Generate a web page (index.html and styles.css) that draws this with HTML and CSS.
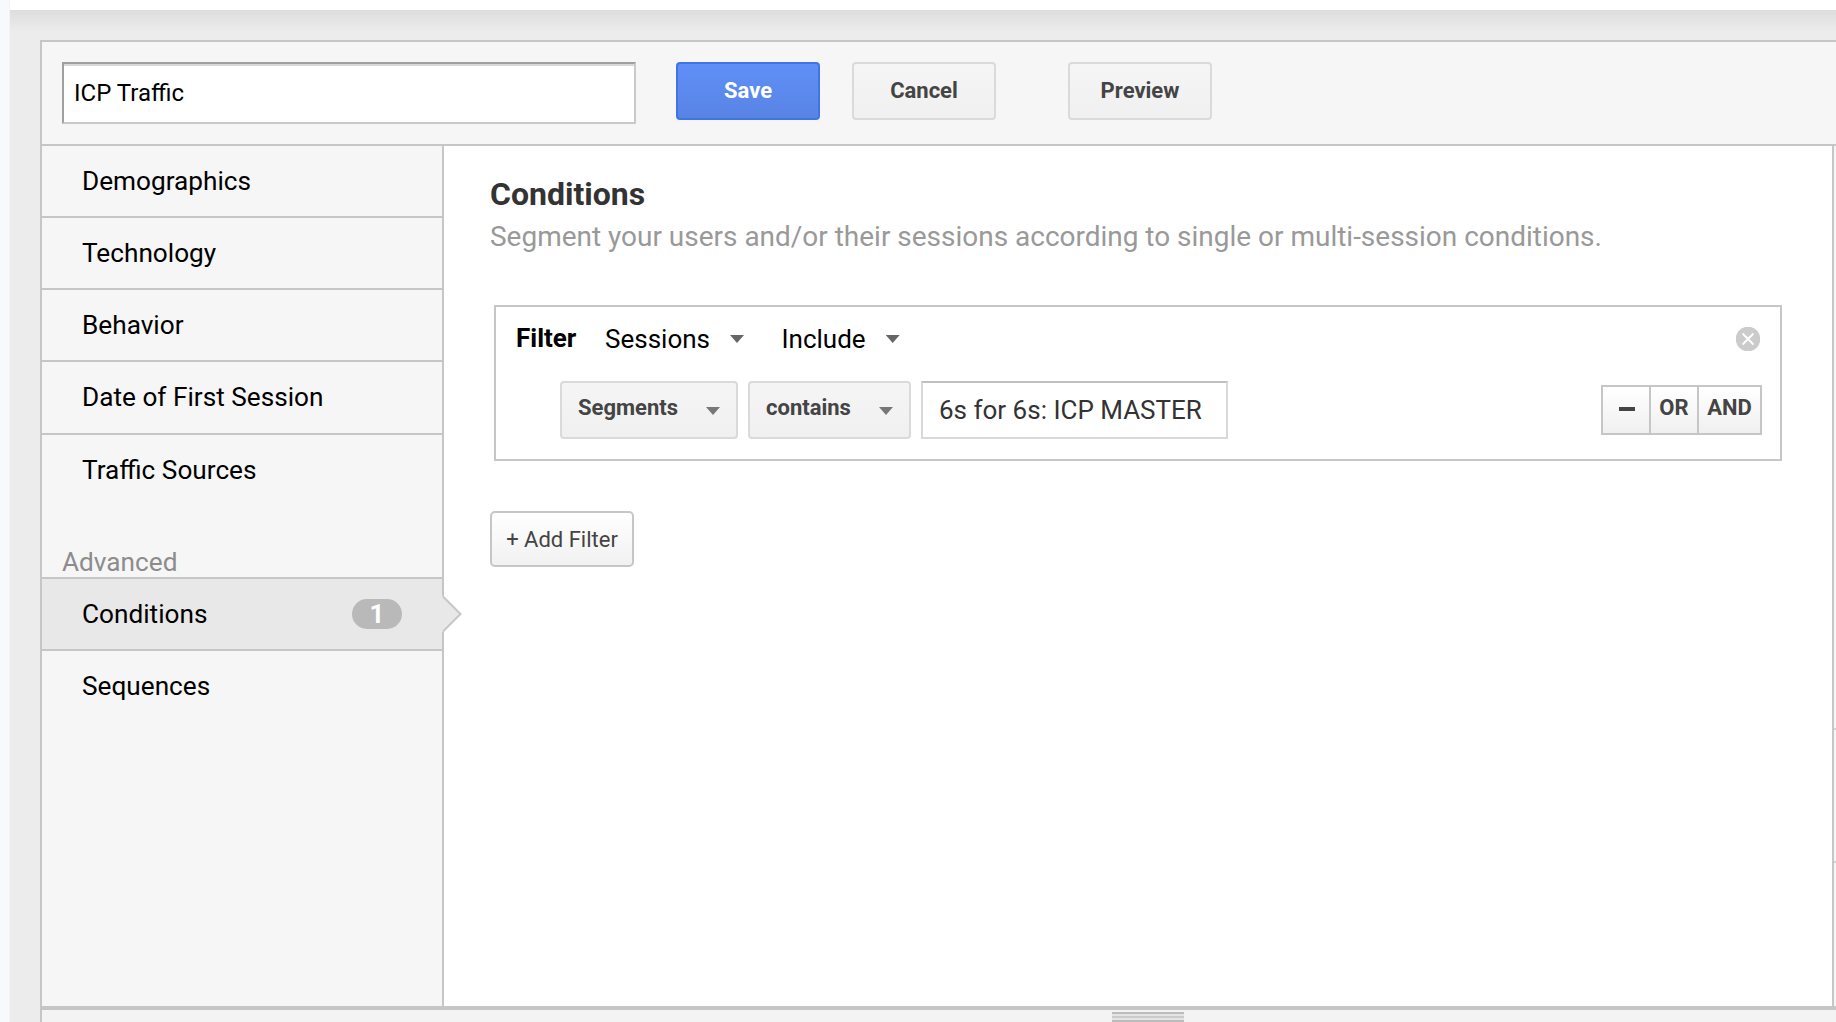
FILE: index.html
```html
<!DOCTYPE html>
<html lang="en">
<head>
  <meta charset="utf-8">
  <title>Segment Builder</title>
  <link rel="stylesheet" href="styles.css">
</head>
<body>

  <div class="page">
    <div class="builder">

      <div class="toolbar">
        <input class="segment-name" type="text" value="ICP Traffic">
        <button class="btn save">Save</button>
        <button class="btn cancel">Cancel</button>
        <button class="btn preview">Preview</button>
      </div>

      <div class="main">
        <div class="sidebar">
          <div class="item">Demographics</div>
          <div class="item">Technology</div>
          <div class="item">Behavior</div>
          <div class="item">Date of First Session</div>
          <div class="item last">Traffic Sources</div>
          <div class="group-title">Advanced</div>
          <div class="item active">
            Conditions
            <span class="count">1</span>
            <svg class="pointer" width="20" height="36" viewBox="0 0 20 36">
              <path d="M0 0 L2 1 L18.500 18 L2 35 L0 36 Z" fill="#e8e8e8"/>
              <path d="M1 0.500 L18.500 18 L1 35.500" fill="none" stroke="#c6c6c6" stroke-width="2"/>
            </svg>
          </div>
          <div class="item last">Sequences</div>
        </div>

        <div class="content">
          <h1>Conditions</h1>
          <p class="description">Segment your users and/or their sessions according to single or multi-session conditions.</p>

          <div class="filter">
            <div class="filter-head">
              <span class="filter-label">Filter</span>
              <span class="select sessions">Sessions <i class="arrow"></i></span>
              <span class="select">Include <i class="arrow"></i></span>
              <svg class="close" width="24" height="24" viewBox="0 0 24 24">
                <circle cx="12" cy="12" r="12.300" fill="#cbcbcb"/>
                <path d="M6.500 6.500 L17.500 17.500 M17.500 6.500 L6.500 17.500" stroke="#fff" stroke-width="2"/>
              </svg>
            </div>
            <div class="filter-row">
              <button class="btn dropdown dimension">Segments <i class="arrow"></i></button>
              <button class="btn dropdown match">contains <i class="arrow"></i></button>
              <input class="value" type="text" value="6s for 6s: ICP MASTER">
              <div class="logic">
                <button class="minus"><i></i></button>
                <button>OR</button>
                <button class="and">AND</button>
              </div>
            </div>
          </div>

          <button class="add-filter">+ Add Filter</button>
        </div>

        <div class="summary">
          <div class="users"></div>
          <div class="sessions-total"></div>
        </div>
      </div>

      <div class="footer">
        <div class="handle"></div>
      </div>

    </div>
  </div>

</body>
</html>
```

FILE: styles.css
```css
* {
  box-sizing: border-box;
}

body {
  margin: 0;
  height: 1022px;
  padding: 10px 0 0 10px;
  overflow: hidden;
  font-family: Roboto, Arial, sans-serif;
  font-size: 26px;
  color: #000;
  background: linear-gradient(to right, #f7f9fc 9px, #f1f3f5 9px, #f1f3f5 10px, #fff 10px);
}

button,
input {
  font-family: inherit;
  margin: 0;
}

.page {
  height: 1012px;
  padding: 30px 0 0 30px;
  background: #ececec linear-gradient(#ddd, #ececec) no-repeat;
  background-size: 100% 22px;
}

.builder {
  height: 982px;
  display: flex;
  flex-direction: column;
  border-top: 2px solid #c6c6c6;
  border-left: 2px solid #c6c6c6;
  background: #f6f6f6;
}

/* toolbar */
.toolbar {
  height: 104px;
  display: flex;
  align-items: flex-start;
  padding: 20px;
  border-bottom: 2px solid #c6c6c6;
}

.segment-name {
  width: 574px;
  height: 62px;
  padding: 0 10px;
  border: 2px solid #c9c9c9;
  border-top-color: #a0a0a0;
  border-left-color: #a0a0a0;
  box-shadow: inset 0 2px #d9d9d9;
  font-size: 24px;
  color: #000;
  background: #fff;
}

.btn {
  width: 144px;
  height: 58px;
  padding: 0 0 1px;
  border: 2px solid #dadada;
  border-radius: 4px;
  font-size: 22px;
  font-weight: bold;
  color: #444;
  background: linear-gradient(#f5f5f5, #f0f0f0);
}

.save {
  margin-left: 40px;
  border-color: #4174e6;
  color: #fff;
  background: linear-gradient(#5f8ff7, #5884e4);
}

.cancel {
  margin-left: 32px;
}

.preview {
  margin-left: 72px;
}

/* sidebar */
.main {
  height: 860px;
  display: flex;
}

.sidebar {
  width: 402px;
  border-right: 2px solid #c6c6c6;
  font-size: 26.2px;
}

.item {
  height: 72.15px;
  display: flex;
  align-items: center;
  padding: 0 40px;
  border-bottom: 2px solid #c6c6c6;
}

.item.last {
  border-bottom: none;
  height: 70px;
}

.group-title {
  height: 74.4px;
  padding: 42.4px 0 0 20px;
  line-height: 30px;
  color: #8c8c8c;
  border-bottom: 2px solid #c6c6c6;
}

.item.active {
  position: relative;
  background: #e8e8e8;
}

.count {
  width: 50px;
  height: 30px;
  margin-left: auto;
  border-radius: 15px;
  line-height: 30px;
  text-align: center;
  font-size: 26px;
  font-weight: bold;
  color: #fff;
  background: #b9b9b9;
}

.pointer {
  position: absolute;
  top: 17px;
  right: -20px;
}

/* content */
.content {
  width: 1390px;
  padding: 31px 50px 0 46px;
  border-right: 2px solid #c6c6c6;
  background: #fff;
}

h1 {
  margin: 0;
  font-size: 32px;
  line-height: 34px;
  color: #333;
}

.description {
  margin: 9px 0 0;
  font-size: 27.97px;
  line-height: 34px;
  color: #999;
  white-space: nowrap;
}

.filter {
  width: 1288px;
  height: 156px;
  margin: 51px 0 0 4px;
  padding: 15px 18px 0 20px;
  border: 2px solid #c6c6c6;
}

.filter-head {
  height: 34px;
  display: flex;
  align-items: center;
}

.filter-label {
  width: 89px;
  padding-bottom: 2px;
  font-weight: bold;
}

.select {
  display: flex;
  align-items: center;
}

.sessions {
  margin-right: 37.5px;
}

.arrow {
  width: 14px;
  height: 8px;
  margin-left: 20px;
  background: #666;
  clip-path: polygon(0 0, 100% 0, 50% 100%);
}

.close {
  margin: 0 2px 0 auto;
}

.filter-row {
  display: flex;
  margin: 25px 0 0 44px;
}

.dropdown {
  display: flex;
  align-items: center;
  justify-content: space-between;
  padding: 0 16px 5px;
  margin-right: 10px;
}

.dropdown .arrow {
  margin: 7px 0 0;
  background: #777;
}

.dimension {
  width: 178px;
}

.match {
  width: 163px;
}

.value {
  width: 307px;
  height: 58px;
  padding: 0 16px;
  border: 2px solid #d9d9d9;
  border-top-color: #c0c0c0;
  font-size: 26px;
  color: #333;
}

.logic {
  height: 50px;
  display: flex;
  margin: 4px 0 0 auto;
  border: 2px solid #c6c6c6;
}

.logic button {
  width: 48px;
  padding: 0 0 5px;
  border: none;
  border-right: 2px solid #c6c6c6;
  font-size: 22px;
  font-weight: bold;
  color: #444;
  background: linear-gradient(#fff, #f0f0f0);
}

.logic .and {
  width: 61px;
  border-right: none;
}

.logic .minus {
  padding: 0 0 3px 2px;
}

.minus i {
  display: block;
  width: 16px;
  height: 4px;
  margin: 0 auto;
  background: #444;
}

.add-filter {
  display: block;
  width: 144px;
  height: 56px;
  margin-top: 50px;
  padding: 0;
  border: 2px solid #c6c6c6;
  border-radius: 5px;
  font-size: 22px;
  color: #444;
  background: linear-gradient(#fff, #f1f1f1);
}

/* summary column, only its edge is in view */
.summary {
  flex: 1;
}

.users {
  height: 584px;
  border-bottom: 2px solid #d4d4d4;
}

.sessions-total {
  height: 133px;
  border-bottom: 2px solid #d4d4d4;
}

/* resize bar */
.footer {
  height: 16px;
  padding-top: 2px;
  border-top: 4px solid #c6c6c6;
  background: #f3f3f3;
}

.handle {
  width: 72px;
  height: 10px;
  margin-left: 1070px;
  background: linear-gradient(#bcbcbc 2px, #e4e4e4 2px, #e4e4e4 4px, #cacaca 4px, #cacaca 6px, #e4e4e4 6px, #e4e4e4 8px, #bcbcbc 8px);
}
```
